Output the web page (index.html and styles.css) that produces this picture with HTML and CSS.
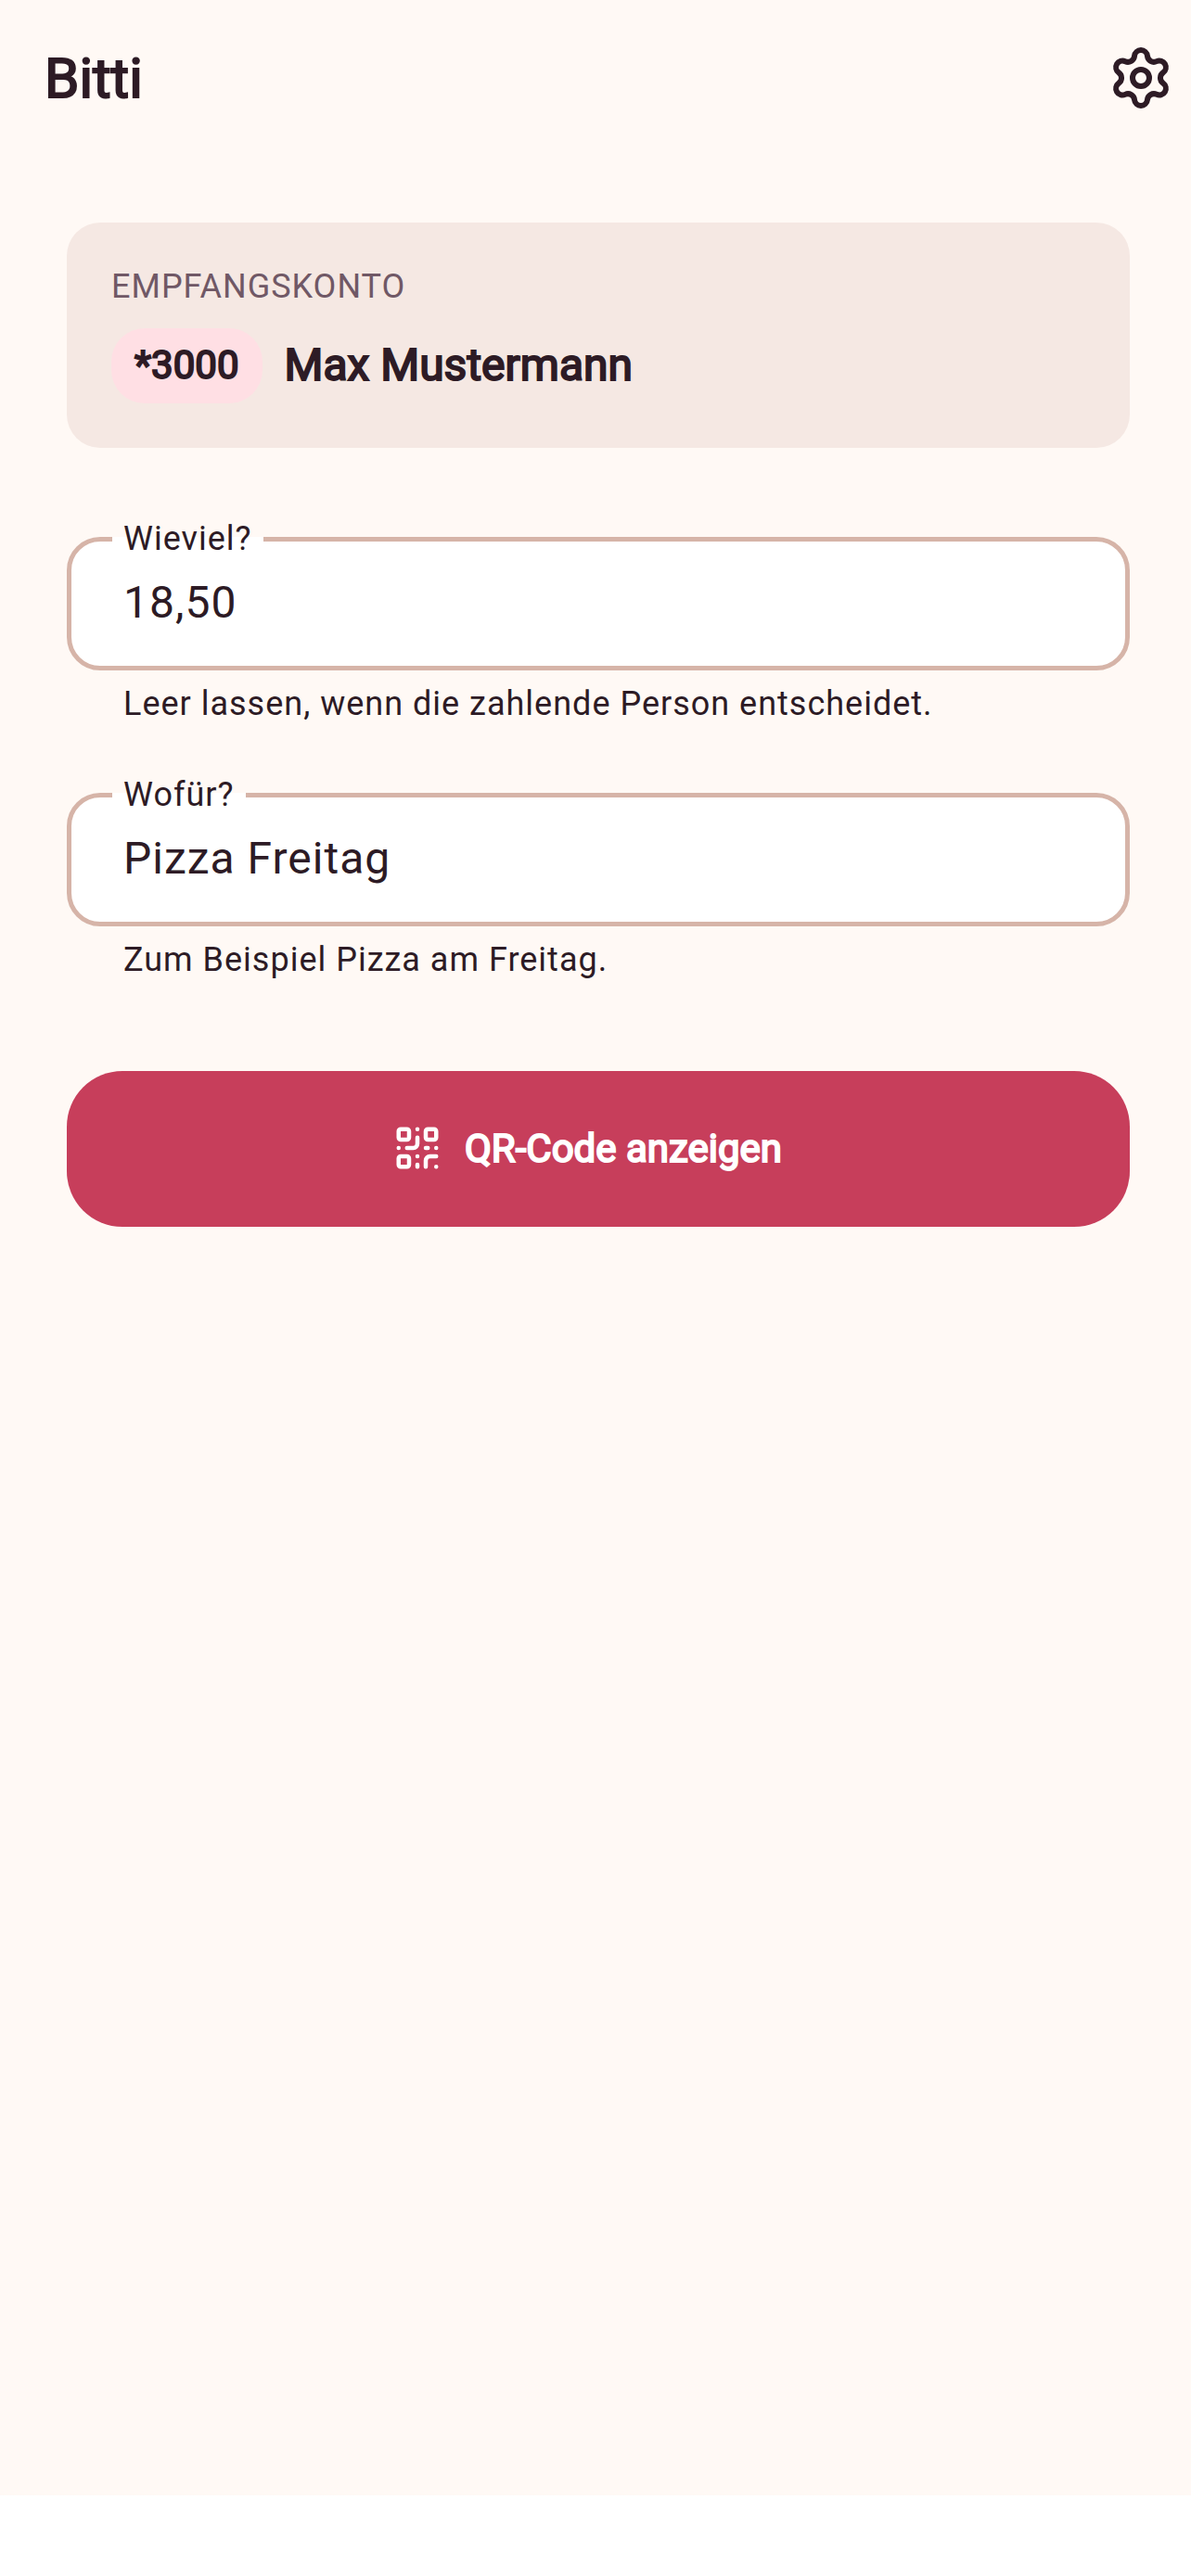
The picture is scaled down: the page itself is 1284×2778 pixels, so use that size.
FILE: index.html
```html
<!DOCTYPE html>
<html lang="de">
<head>
  <meta charset="UTF-8" />
  <meta name="viewport" content="width=device-width, initial-scale=1.0"/>
  <title>Bitti</title>
  <link rel="stylesheet" href="styles.css">
</head>
<body>
  <header class="app-bar">
    <h1>Bitti</h1>
    <button type="button" class="icon-button" aria-label="Einstellungen">
      <svg class="icon" viewBox="0 0 24 24">
        <path d="M9.671 4.136a2.34 2.34 0 0 1 4.659 0 2.34 2.34 0 0 0 3.319 1.915 2.34 2.34 0 0 1 2.33 4.033 2.34 2.34 0 0 0 0 3.831 2.34 2.34 0 0 1-2.33 4.033 2.34 2.34 0 0 0-3.319 1.915 2.34 2.34 0 0 1-4.659 0 2.34 2.34 0 0 0-3.32-1.915 2.34 2.34 0 0 1-2.33-4.033 2.34 2.34 0 0 0 0-3.831A2.34 2.34 0 0 1 6.35 6.051a2.34 2.34 0 0 0 3.319-1.915"/>
        <circle cx="12" cy="12" r="3"/>
      </svg>
    </button>
  </header>

  <main class="content">
    <!-- Receiving account -->
    <section class="account-card">
      <h2>Empfangskonto</h2>
      <div class="account-row">
        <span class="account-number">*3000</span>
        <span class="account-name">Max Mustermann</span>
      </div>
    </section>

    <!-- Payment form -->
    <form class="pay-form">
      <div class="field">
        <fieldset>
          <legend><label for="amount">Wieviel?</label></legend>
          <input type="text" id="amount" inputmode="decimal" value="18,50" aria-describedby="amountHint" />
        </fieldset>
        <p class="hint" id="amountHint">Leer lassen, wenn die zahlende Person entscheidet.</p>
      </div>

      <div class="field">
        <fieldset>
          <legend><label for="purpose">Wofür?</label></legend>
          <input type="text" id="purpose" value="Pizza Freitag" aria-describedby="purposeHint" />
        </fieldset>
        <p class="hint" id="purposeHint">Zum Beispiel Pizza am Freitag.</p>
      </div>

      <button type="button" class="show-button">
        <svg class="icon" viewBox="0 0 24 24">
          <rect width="5" height="5" x="3" y="3" rx="1"/>
          <rect width="5" height="5" x="16" y="3" rx="1"/>
          <rect width="5" height="5" x="3" y="16" rx="1"/>
          <path d="M21 16h-3a2 2 0 0 0-2 2v3M21 21v.01M12 7v3a2 2 0 0 1-2 2H7M3 12h.01M12 3h.01M12 16v.01M16 12h1M21 12v.01M12 21v-1"/>
        </svg>
        QR-Code anzeigen
      </button>
    </form>
  </main>

  <footer class="bottom-bar"></footer>
</body>
</html>
```
FILE: styles.css
```css
* {
  box-sizing: border-box;
}

body {
  margin: 0;
  min-height: 100vh;
  display: flex;
  flex-direction: column;
  font-family: Roboto, sans-serif;
  color: #2d1b25;
  background: #fff9f5;
}

h1, h2, p {
  margin: 0;
}

button {
  border: none;
  font-family: inherit;
  cursor: pointer;
}

.icon {
  display: block;
  fill: none;
  stroke: currentColor;
  stroke-width: 2;
  stroke-linecap: round;
  stroke-linejoin: round;
}

/* Regular cut thickened with an outline */
.app-bar h1,
.account-number,
.account-name,
.show-button {
  font-weight: 400;
  -webkit-text-stroke: 2px currentColor;
}

.app-bar {
  display: flex;
  align-items: center;
  justify-content: space-between;
  height: 168px;
  padding: 0 18px 0 48px;
}

.app-bar h1 {
  font-size: 60px;
}

.icon-button {
  padding: 0;
  color: inherit;
  background: none;
}

.icon-button .icon {
  width: 72px;
  height: 72px;
}

.content {
  flex: 1;
  padding: 72px 66px 72px 72px;
}

.account-card {
  padding: 45px 48px 48px;
  border-radius: 36px;
  background: #f5e8e3;
}

.account-card h2 {
  margin-bottom: 21px;
  font-size: 36px;
  font-weight: 400;
  line-height: 48px;
  letter-spacing: 1px;
  text-transform: uppercase;
  color: #705866;
}

.account-row {
  display: flex;
  align-items: center;
  gap: 24px;
}

.account-number {
  padding: 11px 25px 13px;
  border-radius: 36px;
  font-size: 42px;
  line-height: 57px;
  background: #ffdfe4;
}

.account-name {
  padding-bottom: 2px;
  font-size: 48px;
}

.pay-form {
  display: flex;
  flex-direction: column;
  gap: 54px;
  margin-top: 78px;
}

.field fieldset {
  margin: 0;
  padding: 0 56px 0 44px;
  border: 5px solid #d6b4a8;
  border-radius: 36px;
  background: #fff;
}

.field legend {
  padding: 0 12px;
  font-size: 36px;
  line-height: 40px;
  letter-spacing: 1px;
}

.field input {
  display: block;
  width: 100%;
  height: 117px;
  padding: 0 12px 20px;
  border: none;
  outline: none;
  font-family: inherit;
  font-size: 48px;
  letter-spacing: 1px;
  color: inherit;
  background: none;
}

.hint {
  margin-top: 12px;
  padding: 0 61px;
  font-size: 36px;
  line-height: 48px;
  letter-spacing: 1px;
}

.show-button {
  display: flex;
  align-items: center;
  justify-content: center;
  gap: 24px;
  height: 168px;
  margin-top: 42px;
  padding: 0 48px 2px 24px;
  border-radius: 60px;
  font-size: 42px;
  color: #fff;
  background: #c73e5b;
}

.show-button .icon {
  width: 54px;
  height: 54px;
}

.bottom-bar {
  height: 87px;
  background: #fff;
}
```
